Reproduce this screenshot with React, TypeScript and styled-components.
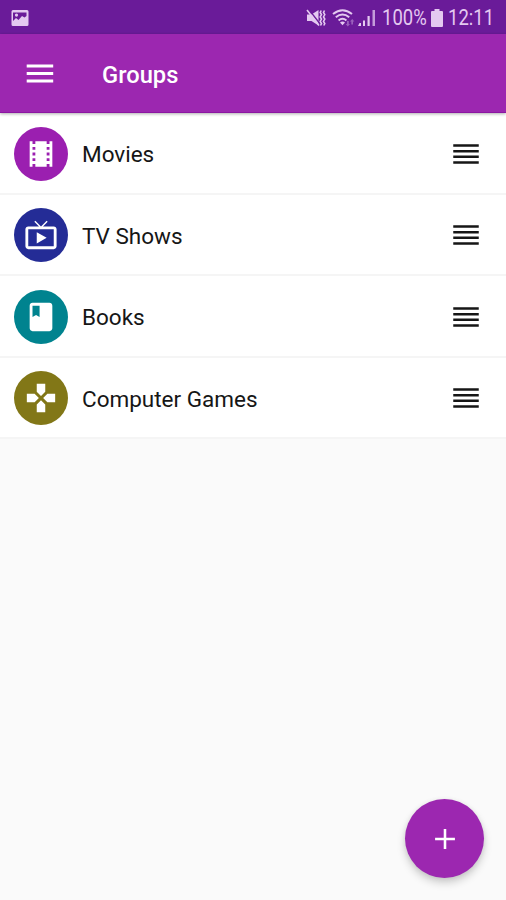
import React from 'react';
import styled, { createGlobalStyle } from 'styled-components';

const GlobalStyle = createGlobalStyle`
  * { box-sizing: border-box; }
  body { margin: 0; background: #fafafa; font-family: Roboto, sans-serif; }
`;

const Screen = styled.div`
  position: relative;
  display: flex;
  flex-direction: column;
  width: 506px;
  height: 900px;
  overflow: hidden;
  background: #fafafa;
`;

const StatusBar = styled.header`
  display: flex;
  align-items: center;
  justify-content: space-between;
  flex: none;
  height: 34px;
  padding: 2px 11px 0 11px;
  background: #6a1b99;
  color: #e4c9f0;
`;

const StatusIcons = styled.div`
  display: flex;
  align-items: center;
`;

const StatusText = styled.span<{ $width: number }>`
  display: block;
  width: ${({ $width }) => $width}px;
  font-size: 21.5px;
  line-height: 32px;
  white-space: nowrap;
  transform: scaleX(0.86);
  transform-origin: left center;
`;

const Glyph = styled.svg<{ $gap?: number }>`
  display: block;
  flex: none;
  margin-right: ${({ $gap = 0 }) => $gap}px;
  fill: currentColor;
`;

const AppBar = styled.nav`
  display: flex;
  align-items: center;
  flex: none;
  height: 79px;
  padding: 1px 23px 0;
  background: #9c27b0;
  color: #fff;
  border-bottom: 1px solid #8c16a2;
  box-shadow: 0 1px 3px rgba(0, 0, 0, 0.32);
  z-index: 1;
`;

const BarButton = styled.button`
  display: flex;
  margin: 0 45px 0 0;
  padding: 0;
  border: 0;
  background: none;
  color: inherit;
`;

const Title = styled.h1`
  margin: 2px 0 0;
  font-size: 23.7px;
  font-weight: 500;
  line-height: 32px;
`;

const List = styled.ul`
  margin: 0;
  padding: 0;
  list-style: none;
`;

const Row = styled.li`
  display: flex;
  align-items: center;
  height: 81.5px;
  padding: 2px 23px 0 14px;
  background: #fff;
  border-bottom: 2px solid #f5f5f5;
  color: #161616;
`;

const Avatar = styled.span<{ $color: string }>`
  display: flex;
  align-items: center;
  justify-content: center;
  width: 54px;
  height: 54px;
  margin-right: 14px;
  border-radius: 50%;
  background: ${({ $color }) => $color};
  color: #fff;
`;

const Label = styled.span`
  flex: 1;
  padding-top: 1px;
  font-size: 22.5px;
  line-height: 30px;
`;

const AddButton = styled.button`
  position: absolute;
  right: 22px;
  bottom: 22px;
  display: flex;
  align-items: center;
  justify-content: center;
  width: 79px;
  height: 79px;
  padding: 0;
  border: 0;
  border-radius: 50%;
  background: #9c27b0;
  color: #fff;
  box-shadow: 0 5px 9px rgba(0, 0, 0, 0.18), 0 1px 5px rgba(0, 0, 0, 0.08);
`;

const groups = [
  {
    name: 'Movies',
    color: '#9b1fb0',
    icon: 'M18 3v2h-2V3H8v2H6V3H4v18h2v-2h2v2h8v-2h2v2h2V3h-2zM8 17H6v-2h2v2zm0-4H6v-2h2v2zm0-4H6V7h2v2zm10 8h-2v-2h2v2zm0-4h-2v-2h2v2zm0-4h-2V7h2v2z',
  },
  {
    name: 'TV Shows',
    color: '#242c96',
    icon: 'M21 6h-7.59l3.29-3.29L16 2l-4 4-4-4-.7.71L10.59 6H3c-1.1 0-2 .89-2 2v12c0 1.1.9 2 2 2h18c1.1 0 2-.9 2-2V8c0-1.11-.9-2-2-2zm0 14H3V8h18v12zM9 10v8l7-4z',
  },
  {
    name: 'Books',
    color: '#00838f',
    icon: 'M18 2H6c-1.1 0-2 .9-2 2v16c0 1.1.9 2 2 2h12c1.1 0 2-.9 2-2V4c0-1.1-.9-2-2-2zM6 4h5v8l-2.5-1.5L6 12V4z',
  },
  {
    name: 'Computer Games',
    color: '#827717',
    icon: 'M15 7.5V2H9v5.5l3 3 3-3zM7.5 9H2v6h5.5l3-3-3-3zM9 16.5V22h6v-5.5l-3-3-3 3zM16.5 9l-3 3 3 3H22V9h-5.5z',
  },
];

export default function App() {
  return (
    <>
      <GlobalStyle />
      <Screen>
        <StatusBar>
          <Glyph width="18" height="18" viewBox="0 0 18 18">
            <path
              fillRule="evenodd"
              d="M2 1h14a1.500 1.500 0 0 1 1.500 1.500v13a1.500 1.500 0 0 1-1.500 1.500H2a1.500 1.500 0 0 1-1.500-1.500v-13A1.500 1.500 0 0 1 2 1zm0 2.500V12l3-3 2.500 2 3.500-4 2.500 1.500L15.500 7V3.500zM5.500 4.500a1.600 1.600 0 1 1 0 3.200 1.600 1.600 0 0 1 0-3.200z"
            />
          </Glyph>
          <StatusIcons>
            <Glyph width="20" height="20" viewBox="0 0 20 20" $gap={6}>
              <path d="M1 6.500h4.500L12.500 2v15.500L5.500 13H1z" />
              <path d="M2.500 1l12 15.500" stroke="#6a1b99" strokeWidth="1.300" />
              <path d="M1 2l12 15.500" stroke="currentColor" strokeWidth="1.600" />
              <path
                d="M15.200 2.500l-1 2 1.300 2-1.300 2.500 1.300 2-1.300 2.500 1.300 2-1 2M18.500 2.500l-1 2 1.300 2-1.300 2.500 1.300 2-1.300 2.500 1.300 2-1 2"
                fill="none"
                stroke="currentColor"
                strokeWidth="1.600"
              />
            </Glyph>
            <Glyph width="23" height="20" viewBox="0 0 23 20" $gap={3}>
              <path
                d="M1 6Q10.500-1.500 20 6M3.800 9.300Q10.500 3.800 17.200 9.300M6.600 12.600Q10.500 9 14.400 12.600"
                fill="none"
                stroke="currentColor"
                strokeWidth="2"
              />
              <path d="M8 14.500Q10.500 12.500 13 14.500L10.500 17.300z" />
              <path d="M15 13h1.800v3H18l-2.200 2.500L13.700 16H15zM19.300 16.500v-3H18l2.200-2.500 2.200 2.500H21v3z" opacity=".4" />
            </Glyph>
            <Glyph width="18" height="18" viewBox="0 0 18 18" $gap={6}>
              <path d="M1.500 14H3v3H0zM5 11.500h2V17H5zM9.500 7h2.200v10H9.500z" />
              <path d="M14.500 1H17v16h-2.500z" opacity=".75" />
            </Glyph>
            <StatusText $width={49}>100%</StatusText>
            <Glyph width="12" height="18" viewBox="0 0 12 18" $gap={5}>
              <path d="M3.500 0h5v2H11a1 1 0 0 1 1 1v14a1 1 0 0 1-1 1H1a1 1 0 0 1-1-1V3a1 1 0 0 1 1-1h2.500z" />
            </Glyph>
            <StatusText $width={47}>12:11</StatusText>
          </StatusIcons>
        </StatusBar>
        <AppBar>
          <BarButton aria-label="Menu">
            <Glyph width="34" height="34" viewBox="0 0 34 34">
              <path d="M3.700 7.500h26.500v3H3.700zM3.700 15h26.500v3H3.700zM3.700 22.600h26.500v3H3.700z" />
            </Glyph>
          </BarButton>
          <Title>Groups</Title>
        </AppBar>
        <List>
          {groups.map(({ name, color, icon }) => (
            <Row key={name}>
              <Avatar $color={color}>
                <Glyph width="34" height="34" viewBox="0 0 24 24">
                  <path d={icon} />
                </Glyph>
              </Avatar>
              <Label>{name}</Label>
              <Glyph width="34" height="34" viewBox="0 0 24 24">
                <path d="M3 14.900h18v-1.800H3zM3 18.900h18v-1.800H3zM3 10.900h18V9.100H3zM3 5.100v1.800h18V5.100z" />
              </Glyph>
            </Row>
          ))}
        </List>
        <AddButton aria-label="Add group">
          <Glyph width="34" height="34" viewBox="0 0 24 24">
            <path d="M19 12.900h-6.100V19h-1.800v-6.100H5v-1.800h6.100V5h1.800v6.100H19z" />
          </Glyph>
        </AddButton>
      </Screen>
    </>
  );
}
